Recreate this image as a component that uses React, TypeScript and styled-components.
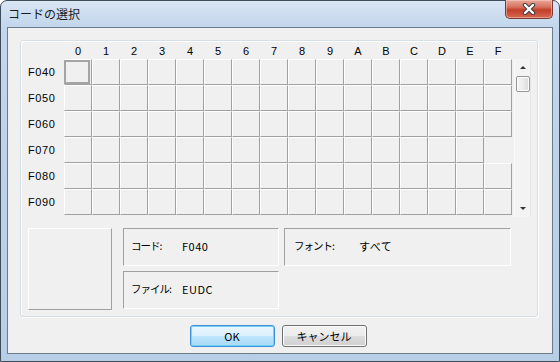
import React from 'react';
import styled, {createGlobalStyle} from "styled-components";

const GlobalStyle = createGlobalStyle`
  html, body {
    margin: 0;
    padding: 0;
    background: #ffffff;
  }
  * {
    box-sizing: border-box;
  }
`

const UI_FONT = `"Liberation Sans", "Noto Sans CJK JP", sans-serif`
const JP_FONT = `"Noto Sans CJK JP", "Liberation Sans", sans-serif`

const COLUMNS = ['0', '1', '2', '3', '4', '5', '6', '7', '8', '9', 'A', 'B', 'C', 'D', 'E', 'F']
const ROWS = ['F040', 'F050', 'F060', 'F070', 'F080', 'F090']

export default function App() {
    return (
        <>
            <GlobalStyle/>
            <Window>
                <TitleBar>
                    <Title>コードの選択</Title>
                    <CloseButton>
                        <svg width="18" height="12" viewBox="0 0 18 12">
                            <path d="M5 2 L13 10 M13 2 L5 10" stroke="#3b3f46" strokeWidth="4.4" strokeLinecap="round"/>
                            <path d="M5 2 L13 10 M13 2 L5 10" stroke="#ffffff" strokeWidth="2.4" strokeLinecap="round"/>
                        </svg>
                    </CloseButton>
                </TitleBar>

                <Client>
                    <GroupBox>
                        <TopArea>
                            <CharGrid>
                                <Corner/>
                                {COLUMNS.map(c => <ColHead key={c}>{c}</ColHead>)}
                                {ROWS.map((r, ri) => (
                                    <React.Fragment key={r}>
                                        <RowHead>{r}</RowHead>
                                        {COLUMNS.map((c, ci) => {
                                            if (r === 'F070' && c === 'F') return <EmptyCell key={c}/>
                                            return (
                                                <Cell key={c}>
                                                    {ri === 0 && ci === 0 && <Selected/>}
                                                </Cell>
                                            )
                                        })}
                                    </React.Fragment>
                                ))}
                            </CharGrid>

                            <ScrollBar>
                                <Arrow $dir="up"/>
                                <Thumb/>
                                <Track/>
                                <Arrow $dir="down"/>
                            </ScrollBar>
                        </TopArea>

                        <InfoArea>
                            <Preview/>
                            <InfoColumn $offset={11}>
                                <InfoBox $width={156}>
                                    <InfoLabel $width={51}>コード:</InfoLabel>
                                    <InfoValue>F040</InfoValue>
                                </InfoBox>
                                <InfoBox $width={156}>
                                    <InfoLabel $width={51}>ファイル:</InfoLabel>
                                    <InfoValue>EUDC</InfoValue>
                                </InfoBox>
                            </InfoColumn>
                            <InfoColumn $offset={5}>
                                <InfoBox $width={227} $pad={9}>
                                    <InfoLabel $width={65}>フォント:</InfoLabel>
                                    <InfoValue>すべて</InfoValue>
                                </InfoBox>
                            </InfoColumn>
                        </InfoArea>
                    </GroupBox>

                    <ButtonRow>
                        <DialogButton $primary>OK</DialogButton>
                        <DialogButton>キャンセル</DialogButton>
                    </ButtonRow>
                </Client>
            </Window>
        </>
    );
};

const Window = styled.div`
  width: 560px;
  height: 362px;
  display: flex;
  flex-direction: column;
  padding: 0 6px 7px 6px;
  border: 1px solid #3e4c5c;
  border-radius: 7px 7px 0 0;
  background: linear-gradient(to bottom, #d9e6f4 0px, #c2d6ec 26px, #b7cee6 100%);
`

const TitleBar = styled.div`
  height: 26px;
  display: flex;
  justify-content: space-between;
  align-items: flex-start;
`

const Title = styled.div`
  padding: 5px 0 0 1px;
  font-family: ${JP_FONT};
  font-size: 12px;
  line-height: 16px;
  color: #1b1b1b;
`

const CloseButton = styled.div`
  width: 48px;
  height: 19px;
  margin-top: -1px;
  display: flex;
  align-items: center;
  justify-content: center;
  border: 1px solid #7b3a33;
  border-top: none;
  border-radius: 0 0 5px 5px;
  background: linear-gradient(to bottom, #e9a899 0%, #d7705d 40%, #c23f2a 55%, #d8674f 100%);
  box-shadow: inset 0 0 0 1px rgba(255, 220, 210, 0.45);
`

const Client = styled.div`
  flex: 1;
  display: flex;
  flex-direction: column;
  padding: 12px 14px 0 12px;
  border: 1px solid #6b7b8c;
  background: #f0f0f0;
`

const GroupBox = styled.div`
  height: 277px;
  display: flex;
  flex-direction: column;
  padding: 0 0 0 7px;
  border: 1px solid #d5dfe5;
  border-radius: 3px;
  box-shadow: inset 1px 1px 0 #ffffff, 1px 1px 0 #ffffff;
`

const TopArea = styled.div`
  display: flex;
  align-items: flex-start;
`

const CharGrid = styled.div`
  display: grid;
  grid-template-columns: 36px repeat(16, 28px);
  grid-template-rows: 18px repeat(6, 26px);
`

const Corner = styled.div``

const ColHead = styled.div`
  display: flex;
  align-items: center;
  justify-content: center;
  padding-top: 1px;
  font-family: ${UI_FONT};
  font-size: 11px;
  color: #000000;
`

const RowHead = styled.div`
  display: flex;
  align-items: center;
  font-family: ${UI_FONT};
  font-size: 11px;
  letter-spacing: 0.6px;
  color: #000000;
`

const Cell = styled.div`
  position: relative;
  border-top: 1px solid #ffffff;
  border-left: 1px solid #ffffff;
  border-right: 1px solid #a0a0a0;
  border-bottom: 1px solid #a0a0a0;
  background: #f0f0f0;
`

const EmptyCell = styled.div`
  background: #f0f0f0;
`

const Selected = styled.div`
  position: absolute;
  left: -1px;
  top: 0;
  width: 26px;
  height: 24px;
  border: 2px solid #a4a4a4;
`

const ScrollBar = styled.div`
  width: 17px;
  height: 158px;
  margin: 18px 0 0 2px;
  display: flex;
  flex-direction: column;
  align-items: center;
  background: #f3f3f3;
  border-left: 1px solid #fafafa;
  border-right: 1px solid #e6e6e6;
`

const Arrow = styled.div<{ $dir: 'up' | 'down' }>`
  width: 15px;
  height: 17px;
  display: flex;
  align-items: center;
  justify-content: center;

  &::after {
    content: '';
    width: 0;
    height: 0;
    border-left: 3.5px solid transparent;
    border-right: 3.5px solid transparent;
    ${p => p.$dir === 'up'
            ? 'border-bottom: 3px solid #333333;'
            : 'border-top: 3px solid #333333;'}
  }
`

const Thumb = styled.div`
  width: 14px;
  height: 16px;
  margin-left: 1px;
  border: 1px solid #979797;
  border-radius: 2px;
  background: linear-gradient(to right, #f6f6f6 0%, #ececec 50%, #d9d9d9 100%);
  box-shadow: inset 0 0 0 1px #fbfbfb;
`

const Track = styled.div`
  flex: 1;
`

const InfoArea = styled.div`
  display: flex;
  margin-top: 11px;
`

const Preview = styled.div`
  width: 84px;
  height: 82px;
  flex-shrink: 0;
  border-top: 1px solid #ffffff;
  border-left: 1px solid #ffffff;
  border-right: 1px solid #a0a0a0;
  border-bottom: 1px solid #a0a0a0;
`

const InfoColumn = styled.div<{ $offset: number }>`
  display: flex;
  flex-direction: column;
  gap: 5px;
  margin-left: ${p => p.$offset}px;
`

const InfoBox = styled.div<{ $width: number, $pad?: number }>`
  width: ${p => p.$width}px;
  height: 38px;
  display: flex;
  align-items: center;
  padding: 0 0 3px ${p => p.$pad ?? 7}px;
  border-top: 1px solid #a0a0a0;
  border-left: 1px solid #a0a0a0;
  border-right: 1px solid #ffffff;
  border-bottom: 1px solid #ffffff;
`

const InfoLabel = styled.span<{ $width: number }>`
  width: ${p => p.$width}px;
  flex-shrink: 0;
  white-space: nowrap;
  font-family: ${JP_FONT};
  font-size: 10.5px;
  letter-spacing: -1px;
  color: #000000;
`

const InfoValue = styled.span`
  font-family: ${JP_FONT};
  font-size: 11px;
  letter-spacing: 0.5px;
  color: #000000;
`

const ButtonRow = styled.div`
  display: flex;
  justify-content: center;
  gap: 7px;
  margin-top: 8px;
  padding-right: 2px;
`

const DialogButton = styled.button<{ $primary?: boolean }>`
  width: 85px;
  height: 22px;
  padding: 0;
  font-family: ${JP_FONT};
  font-size: 11px;
  color: #000000;
  border-radius: 3px;
  border: 1px solid ${p => p.$primary ? '#3c8fd6' : '#707070'};
  background: ${p => p.$primary
          ? 'linear-gradient(to bottom, #eaf6fd 0%, #d9f0fc 50%, #bee6fd 51%, #a7d9f5 100%)'
          : 'linear-gradient(to bottom, #f2f2f2 0%, #ebebeb 50%, #dddddd 51%, #cfcfcf 100%)'};
  box-shadow: inset 0 0 0 1px ${p => p.$primary ? '#78d3f9' : '#fcfcfc'};
`
